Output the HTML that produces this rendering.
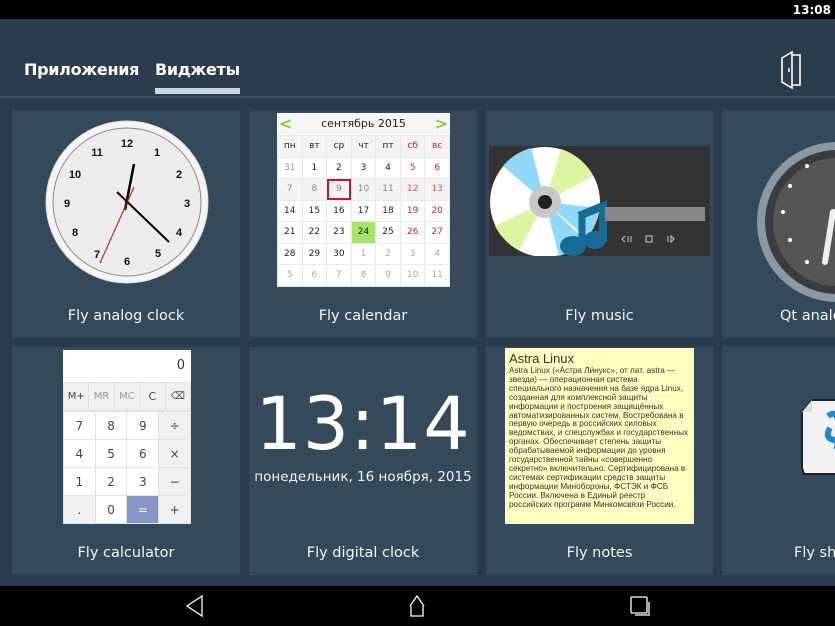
<!DOCTYPE html>
<html><head><meta charset="utf-8"><style>
*{margin:0;padding:0;box-sizing:border-box}
body{width:835px;height:626px;overflow:hidden;background:#2a3c4b;font-family:"DejaVu Sans","Liberation Sans",sans-serif;position:relative}
.status{position:absolute;left:0;top:0;width:835px;height:19px;background:#000;color:#fff;font:bold 12px "DejaVu Sans",sans-serif}
.status span{position:absolute;right:4px;top:3px}
.hdr{position:absolute;left:0;top:19px;width:835px;height:79px;background:#2b3d4d;border-bottom:2px solid #3f5262}
.tab{position:absolute;top:41px;color:#fff;font:bold 16px "DejaVu Sans",sans-serif;letter-spacing:-0.3px}
.ul{position:absolute;left:155px;top:69px;width:85px;height:6px;background:#c9d6e2}
.tile{position:absolute;background:#34495a;width:228px;height:228px}
.lbl{position:absolute;left:0;width:100%;text-align:center;color:#f0f4f7;font-size:14.5px;top:198px}
.nav{position:absolute;left:0;top:586px;width:835px;height:40px;background:#000}
table{border-collapse:collapse}
.cal{position:absolute;left:277px;top:113px;width:173px;height:174px;background:#fff}
.cal td{width:24.7px;height:21.5px;text-align:center;font-size:9px;color:#222;border:1px solid #e8e8e8}
.calc{position:absolute;left:63px;top:350px;width:128px;height:174px;background:#f3f3f3}
.calc td{text-align:center;font-size:12px;color:#444;border:1px solid #e2e2e2;height:28px;width:32px;background:#fff}
</style></head><body>
<div class="status"><span>13:08</span></div>
<div class="hdr">
<div class="tab" style="left:24px">Приложения</div>
<div class="tab" style="left:155px">Виджеты</div>
<div class="ul"></div>
<svg style="position:absolute;left:778px;top:31px" width="28" height="40" viewBox="0 0 28 40"><path d="M4 8 L14 2 L14 38 L4 32 Z M14 5 L22 5 L22 35 L14 35" fill="none" stroke="#fff" stroke-width="1.6"/><line x1="11" y1="18" x2="11" y2="22" stroke="#fff" stroke-width="1.5"/></svg>
</div>

<div class="tile" style="left:12px;top:110px"><div class="lbl">Fly analog clock</div></div>
<div class="tile" style="left:249px;top:110px"><div class="lbl">Fly calendar</div></div>
<div class="tile" style="left:486px;top:110px;width:227px"><div class="lbl">Fly music</div></div>
<div class="tile" style="left:722px;top:110px;width:120px"><div class="lbl" style="left:58px;text-align:left">Qt analo</div></div>
<div class="tile" style="left:12px;top:347px"><div class="lbl">Fly calculator</div></div>
<div class="tile" style="left:249px;top:347px"><div class="lbl">Fly digital clock</div></div>
<div class="tile" style="left:486px;top:347px;width:227px"><div class="lbl">Fly notes</div></div>
<div class="tile" style="left:722px;top:347px;width:120px"><div class="lbl" style="left:72px;text-align:left">Fly sh</div></div>

<svg style="position:absolute;left:44px;top:119px" width="166" height="166" viewBox="-83 -83 166 166">
<circle r="81" fill="#f4f4f4" stroke="#ddd" stroke-width="1"/>
<circle r="74" fill="#ececec" stroke="#888" stroke-width="1"/>
<g font-size="11" fill="#111" text-anchor="middle" font-family="Liberation Sans,sans-serif" font-weight="bold">
<text x="0" y="-55">12</text><text x="30" y="-46">1</text><text x="52" y="-24">2</text><text x="60" y="5">3</text><text x="52" y="34">4</text><text x="31" y="55">5</text><text x="0" y="63">6</text><text x="-30" y="56">7</text><text x="-52" y="34">8</text><text x="-60" y="5">9</text><text x="-52" y="-24">10</text><text x="-30" y="-46">11</text></g>
<line x1="-10" y1="-10" x2="42" y2="40" stroke="#000" stroke-width="2"/>
<line x1="-2" y1="8" x2="7" y2="-38" stroke="#000" stroke-width="2.5"/>
<line x1="-27" y1="61" x2="7" y2="-15" stroke="#d00" stroke-width="1"/>
</svg>

<div class="cal">
<div style="height:22px;position:relative;font-size:11px;text-align:center;line-height:22px;color:#222;background:#f6f6f6">сентябрь 2015
<span style="position:absolute;left:2px;top:0;color:#8c3;font-weight:bold;font-size:16px">&lt;</span><span style="position:absolute;right:2px;top:0;color:#8c3;font-weight:bold;font-size:16px">&gt;</span></div>
<table>
<tr style="background:#f3f3f3"><td>пн</td><td>вт</td><td>ср</td><td>чт</td><td>пт</td><td style="color:#d22">сб</td><td style="color:#d22">вс</td></tr>
<tr><td style="color:#999">31</td><td>1</td><td>2</td><td>3</td><td>4</td><td style="color:#d22">5</td><td style="color:#d22">6</td></tr>
<tr style="background:#f3f3f3"><td style="color:#888">7</td><td style="color:#888">8</td><td style="color:#888;outline:2px solid #c1163a;outline-offset:-2px">9</td><td style="color:#888">10</td><td style="color:#888">11</td><td style="color:#e55">12</td><td style="color:#e55">13</td></tr>
<tr><td>14</td><td>15</td><td>16</td><td>17</td><td>18</td><td style="color:#d22">19</td><td style="color:#d22">20</td></tr>
<tr><td>21</td><td>22</td><td>23</td><td style="background:#a8e46a">24</td><td>25</td><td style="color:#d22">26</td><td style="color:#d22">27</td></tr>
<tr><td>28</td><td>29</td><td>30</td><td style="color:#aaa">1</td><td style="color:#aaa">2</td><td style="color:#aaa">3</td><td style="color:#aaa">4</td></tr>
<tr><td style="color:#aaa">5</td><td style="color:#aaa">6</td><td style="color:#aaa">7</td><td style="color:#aaa">8</td><td style="color:#aaa">9</td><td style="color:#aaa">10</td><td style="color:#aaa">11</td></tr>
</table></div>

<div style="position:absolute;left:489px;top:146px;width:221px;height:110px;background:#333"></div>
<svg style="position:absolute;left:489px;top:146px" width="221" height="110" viewBox="0 0 221 110">
<circle cx="56" cy="56" r="55" fill="#fff"/>
<path d="M56 56 L14 20 A55 55 0 0 1 42 2 Z M56 56 L110 62 A55 55 0 0 1 98 92 Z M56 56 L96 94 A55 55 0 0 1 70 110 Z" fill="#8fd8f7"/>
<path d="M56 56 L72 3 A55 55 0 0 1 104 30 Z M56 56 L30 104 A55 55 0 0 1 6 80 Z" fill="#dcf5a0"/>
<circle cx="56" cy="56" r="16" fill="#c8c8c8"/><circle cx="56" cy="56" r="7" fill="#222"/>
<path d="M90 70 L114 60 L114 96" fill="none" stroke="#156d96" stroke-width="8"/>
<ellipse cx="84" cy="100" rx="13" ry="10" fill="#156d96"/><ellipse cx="106" cy="94" rx="11" ry="9" fill="#156d96"/>
<line x1="93" y1="70" x2="93" y2="98" stroke="#156d96" stroke-width="7"/>
<rect x="116" y="61" width="100" height="14" fill="#888"/>
<g fill="none" stroke="#ccc" stroke-width="1"><path d="M136 90 l-3 3 l3 3 M139 90 v6 M142 90 v6"/><rect x="157" y="90" width="6" height="6"/><path d="M179 90 v6 M182 90 v6 l3 -3 z"/></g>
</svg>

<svg style="position:absolute;left:757px;top:122px" width="78" height="200" viewBox="0 0 78 200">
<circle cx="80" cy="100" r="80" fill="#8b98a2"/><circle cx="80" cy="100" r="72" fill="#3a3d40"/><circle cx="80" cy="100" r="64" fill="#555"/>
<g fill="#fff"><circle cx="50" cy="44" r="2"/><circle cx="33" cy="64" r="2"/><circle cx="26" cy="90" r="2"/><circle cx="33" cy="118" r="2"/><circle cx="50" cy="140" r="2"/></g>
<line x1="68" y1="140" x2="76" y2="90" stroke="#eee" stroke-width="6" stroke-linecap="round"/>
</svg>

<div class="calc">
<div style="height:32px;background:#fff;text-align:right;padding:8px 6px 0 0;font-size:13px;color:#333">0</div>
<table style="width:128px">
<tr><td style="background:#f0f0f0;width:25px;font-size:10px">M+</td><td style="background:#f0f0f0;width:25px;font-size:10px;color:#999">MR</td><td style="background:#f0f0f0;width:25px;font-size:10px;color:#999">MC</td><td style="background:#f0f0f0;width:25px;font-size:11px">C</td><td style="background:#f0f0f0;width:25px;font-size:10px">⌫</td></tr>
</table>
<table style="width:128px">
<tr><td>7</td><td>8</td><td>9</td><td style="background:#f0f0f0">÷</td></tr>
<tr><td>4</td><td>5</td><td>6</td><td style="background:#f0f0f0">×</td></tr>
<tr><td>1</td><td>2</td><td>3</td><td style="background:#f0f0f0">−</td></tr>
<tr><td style="background:#f0f0f0">.</td><td>0</td><td style="background:#8596c6;color:#fff">=</td><td style="background:#f0f0f0">+</td></tr>
</table></div>

<div style="position:absolute;left:249px;top:388px;width:228px;text-align:center;color:#fff;font:73px/1 'DejaVu Sans',sans-serif;letter-spacing:1px">13:14</div>
<div style="position:absolute;left:249px;top:469px;width:228px;text-align:center;color:#f0f4f7;font-size:13.5px;white-space:nowrap">понедельник, 16 ноября, 2015</div>

<div style="position:absolute;left:505px;top:348px;width:189px;height:176px;background:#ffffc0;padding:3px 4px;color:#333;font-family:'Liberation Sans',sans-serif">
<div style="font-size:13px;margin-bottom:1px">Astra Linux</div>
<div style="font-size:8.2px;line-height:8.9px">Astra Linux («Áстра Ли́нукс», от лат. astra — звезда) — операционная система специального назначения на базе ядра Linux, созданная для комплексной защиты информации и построения защищённых автоматизированных систем. Востребована в первую очередь в российских силовых ведомствах, и спецслужбах и государственных органах. Обеспечивает степень защиты обрабатываемой информации до уровня государственной тайны «совершенно секретно» включительно. Сертифицирована в системах сертификации средств защиты информации Минобороны, ФСТЭК и ФСБ России. Включена в Единый реестр российских программ Минкомсвязи России.</div></div>

<svg style="position:absolute;left:800px;top:398px" width="35" height="80" viewBox="0 0 35 80"><path d="M12 2 L40 2 L40 76 L4 76 L2 70 L2 14 Z" fill="#f2f2f2" stroke="#222" stroke-width="2"/><path d="M2 14 L12 2 L12 14 Z" fill="#ddd"/><path d="M28 18 q8 -6 10 4 M30 30 q-6 10 4 12 q6 2 2 10" fill="none" stroke="#1e8ac8" stroke-width="6"/></svg>

<div class="nav">
<svg style="position:absolute;left:183px;top:8px" width="24" height="24" viewBox="0 0 24 24"><path d="M19 2 L4 12 L19 22 Z" fill="none" stroke="#fff" stroke-width="1.3"/></svg>
<svg style="position:absolute;left:404px;top:8px" width="26" height="24" viewBox="0 0 26 24"><path d="M6 12 L13 2 L20 12 M7 12 V22 H19 V12" fill="none" stroke="#fff" stroke-width="1.3"/></svg>
<svg style="position:absolute;left:629px;top:8px" width="26" height="24" viewBox="0 0 26 24"><rect x="2" y="3" width="16" height="16" rx="1" fill="none" stroke="#fff" stroke-width="1.3"/><path d="M20 8 V21 H6" fill="none" stroke="#fff" stroke-width="1.3"/></svg>
</div>
</body></html>
